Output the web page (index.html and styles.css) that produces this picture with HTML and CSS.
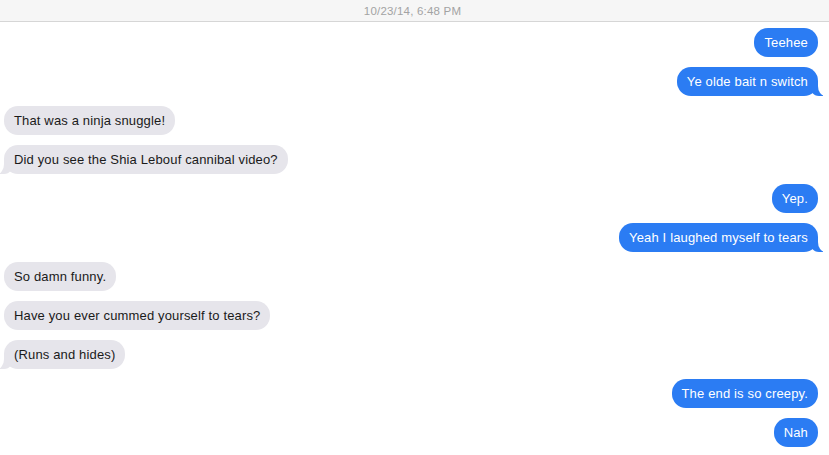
FILE: index.html
```html
<!DOCTYPE html>
<html>
<head>
<meta charset="utf-8">
<link rel="stylesheet" href="styles.css">
</head>
<body>
<header class="header"><span class="stamp">10/23/14, 6:48 PM</span></header>
<main class="thread">
  <div class="msg out">Teehee</div>
  <div class="msg out tail">Ye olde bait n switch</div>
  <div class="msg in">That was a ninja snuggle!</div>
  <div class="msg in tail">Did you see the Shia Lebouf cannibal video?</div>
  <div class="msg out">Yep.</div>
  <div class="msg out tail">Yeah I laughed myself to tears</div>
  <div class="msg in">So damn funny.</div>
  <div class="msg in">Have you ever cummed yourself to tears?</div>
  <div class="msg in tail">(Runs and hides)</div>
  <div class="msg out">The end is so creepy.</div>
  <div class="msg out">Nah</div>
</main>
</body>
</html>
```
FILE: styles.css
```css
html, body {
  margin: 0;
  padding: 0;
  background: #ffffff;
  font-family: "Liberation Sans", Arial, sans-serif;
  overflow: hidden;
}
.header {
  height: 21px;
  background: #f6f6f6;
  border-bottom: 1px solid #d6d6d6;
  display: flex;
  align-items: center;
  justify-content: center;
}
.stamp {
  font-size: 11.5px;
  color: #a3a3a3;
  letter-spacing: 0.2px;
  padding-right: 4px;
}
.thread {
  display: flex;
  flex-direction: column;
  gap: 10px;
  padding: 6px 11px 0 4px;
}
.msg {
  position: relative;
  font-size: 13px;
  line-height: 17px;
  padding: 6px 10px;
  border-radius: 14px;
  max-width: 70%;
}
.out {
  align-self: flex-end;
  background: #2b7cf3;
  color: #ffffff;
  letter-spacing: 0.15px;
}
.in {
  align-self: flex-start;
  background: #e6e5eb;
  color: #1a1a1a;
  letter-spacing: 0.15px;
}
.tail::before,
.tail::after {
  content: "";
  position: absolute;
  bottom: 0;
  height: 14px;
}
.out.tail::before {
  right: -5px;
  width: 14px;
  background: #2b7cf3;
  border-bottom-left-radius: 10px 12px;
  z-index: 0;
}
.out.tail::after {
  right: -9px;
  width: 9px;
  background: #ffffff;
  border-bottom-left-radius: 7px 10px;
  z-index: 1;
}
.in.tail::before {
  left: -4px;
  width: 14px;
  background: #e6e5eb;
  border-bottom-right-radius: 10px 12px;
  z-index: 0;
}
.in.tail::after {
  left: -9px;
  width: 9px;
  background: #ffffff;
  border-bottom-right-radius: 7px 10px;
  z-index: 1;
}
```
